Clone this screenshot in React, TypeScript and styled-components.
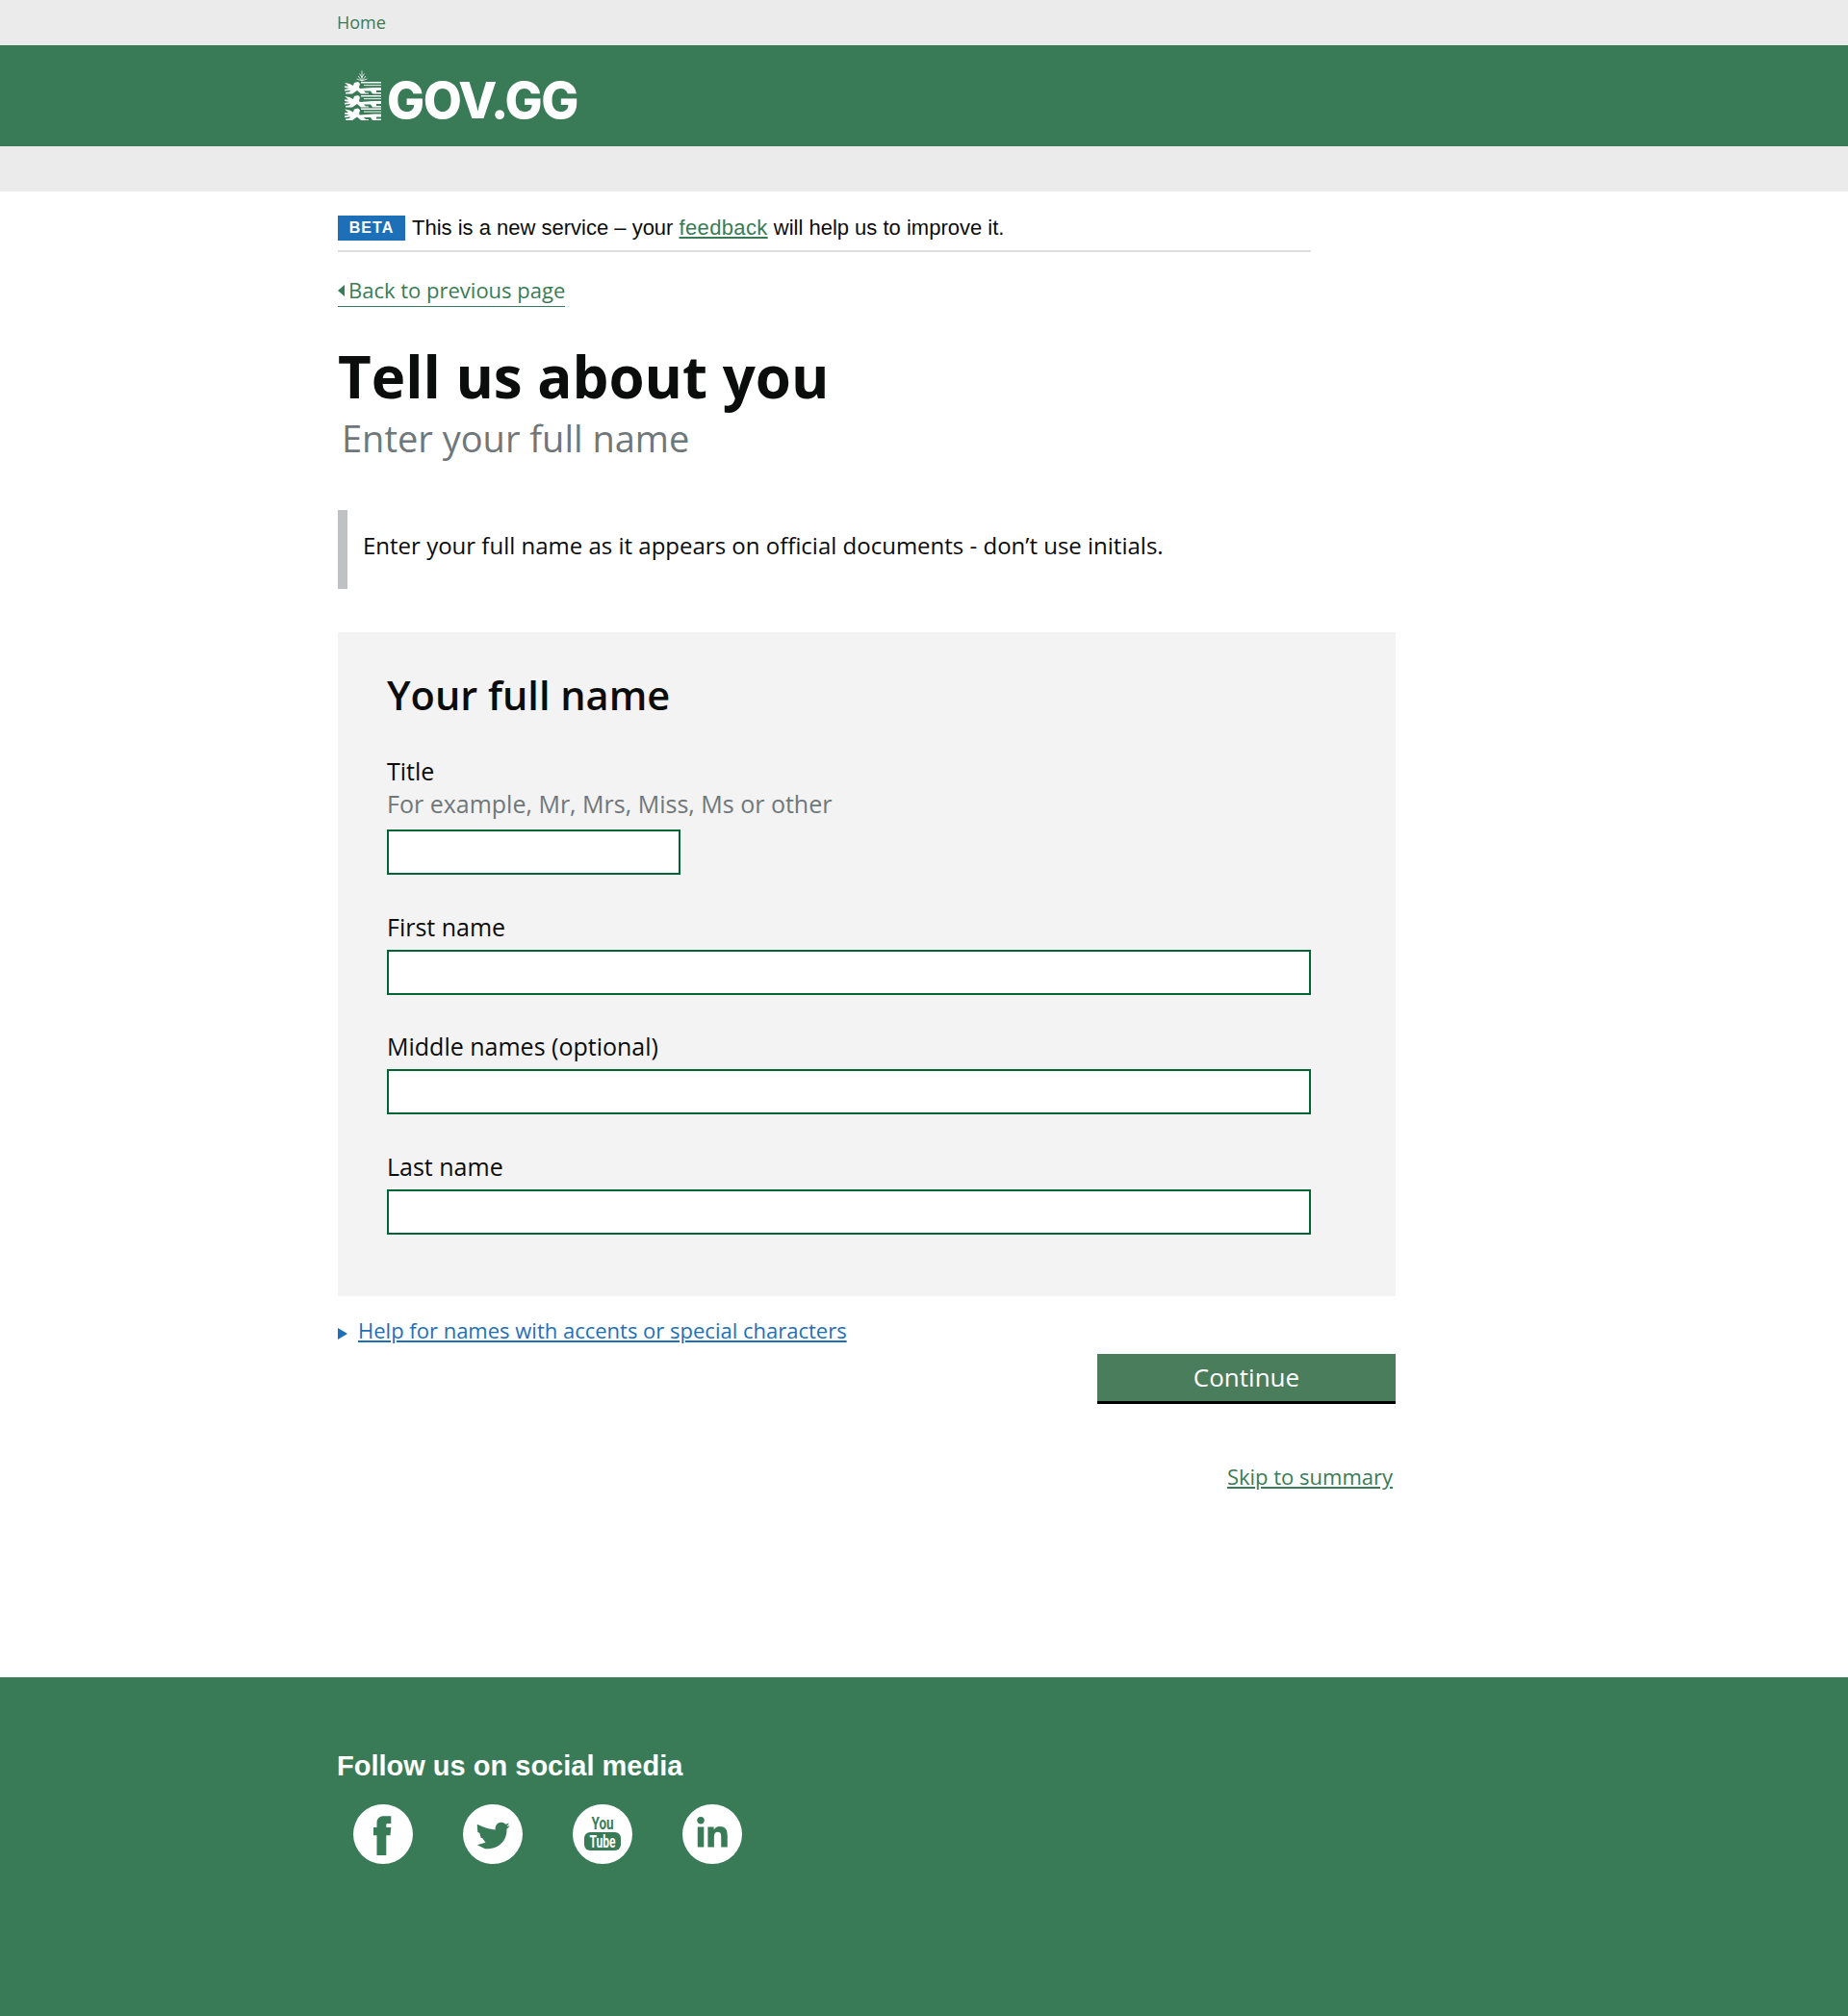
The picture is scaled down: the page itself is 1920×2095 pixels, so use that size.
import React from 'react';
import styled, { createGlobalStyle } from 'styled-components';
import { FaLinkedinIn } from 'react-icons/fa';

const green = '#397b57';

const GlobalStyle = createGlobalStyle`
  html, body { margin: 0; padding: 0; background: #fff; }
  body { font-family: "Open Sans", "Liberation Sans", sans-serif; color: #0b0c0c; }
`;

const Lion = ({ y }: { y: number }) => (
  <g transform={`translate(0 ${y})`} fill="#fff">
    <path d="M0 2l5 1 4 2 1-3 4-1 2 2-1 4 1 1 14-1h8v3h-5v2h5v1.500h-9l-2-3h-7l2 2h3v1h-8l-4-3.500-5 3.500H1V12l4-.5 1-1.500-6 .5V9l5-1-5-1V5.500h4z" />
    <rect x="17" y="1" width="21" height="1.500" />
    <rect x="20" y="4" width="18" height="1.200" opacity=".8" />
  </g>
);

const Crest = () => (
  <CrestSvg viewBox="0 0 38 52" aria-hidden="true">
    <g stroke="#fff" strokeWidth=".9" fill="none" opacity=".85">
      <path d="M18 .5v10.500M18 11l-4-5M18 11l4-5M18 11l-5.500-2M18 11l5.500-2M15.500 3.500l2.500 4 2.500-4" />
    </g>
    <Lion y={11} />
    <Lion y={25} />
    <Lion y={38.500} />
  </CrestSvg>
);

const FacebookMark = () => (
  <svg viewBox="0 0 62 62" width="62" height="62" aria-hidden="true">
    <path
      fill={green}
      d="M24.500 53V32.300H21V24h3.500v-4.500c0-5 3-7.200 7.500-7.200h7.300V20h-3.800c-1 0-1.200.6-1.200 1.500V24h5l-.8 8.300h-4.200V53z"
    />
  </svg>
);

const TwitterMark = () => (
  <svg viewBox="0 0 62 62" width="62" height="62" aria-hidden="true">
    <path
      fill={green}
      d="M48 19.600l-3.500 1.200c-1.500-1.500-3.500-2.200-5.300-2-3.700.4-5.900 3.500-5.600 7.600-6.600-.4-13-3-18.900-5.700l.6 8.300 2 .7 1.400 5.300 1.300 0 3.500 4.700-8.800 2.600 8.300 4c15 .7 23-9 22.500-20.800 1.500-.9 2.300-2 3-3.200l-3 .7z"
    />
  </svg>
);

const YouTubeMark = () => (
  <svg viewBox="0 0 62 62" width="62" height="62" aria-hidden="true">
    <text x="31" y="26" textAnchor="middle" fontFamily="Roboto, sans-serif" fontWeight="700" fontSize="19" textLength="23" lengthAdjust="spacingAndGlyphs" fill={green}>You</text>
    <rect x="12" y="29" width="38" height="19" rx="6" fill={green} />
    <text x="31" y="45" textAnchor="middle" fontFamily="Roboto, sans-serif" fontWeight="700" fontSize="18" textLength="27" lengthAdjust="spacingAndGlyphs" fill="#fff">Tube</text>
  </svg>
);

const fields = [
  { id: 'first', label: 'First name' },
  { id: 'middle', label: 'Middle names (optional)' },
  { id: 'last', label: 'Last name' },
];

export default function App() {
  return (
    <>
      <GlobalStyle />
      <TopBar>
        <Wrap>
          <HomeLink href="#">Home</HomeLink>
        </Wrap>
      </TopBar>
      <Masthead>
        <Wrap>
          <Logo href="#">
            <Crest />
            <LogoText>GOV.GG</LogoText>
          </Logo>
        </Wrap>
      </Masthead>
      <SubBar />
      <Main>
        <BetaRow>
          <BetaTag>BETA</BetaTag>
          <BetaText>
            This is a new service – your <BetaLink href="#">feedback</BetaLink> will help us to improve it.
          </BetaText>
        </BetaRow>
        <BackLink href="#">Back to previous page</BackLink>
        <Heading>Tell us about you</Heading>
        <SubHeading>Enter your full name</SubHeading>
        <Inset>Enter your full name as it appears on official documents - don’t use initials.</Inset>
        <Panel>
          <PanelTitle>Your full name</PanelTitle>
          <Field>
            <Label htmlFor="title">Title</Label>
            <Hint>For example, Mr, Mrs, Miss, Ms or other</Hint>
            <Input id="title" $short />
          </Field>
          {fields.map((f) => (
            <Field key={f.id}>
              <Label htmlFor={f.id}>{f.label}</Label>
              <Input id={f.id} />
            </Field>
          ))}
        </Panel>
        <HelpLine>
          <HelpArrow />
          <HelpLink href="#">Help for names with accents or special characters</HelpLink>
        </HelpLine>
        <Actions>
          <ContinueButton type="button">Continue</ContinueButton>
          <SkipLink href="#">Skip to summary</SkipLink>
        </Actions>
      </Main>
      <Footer>
        <Wrap>
          <FooterTitle>Follow us on social media</FooterTitle>
          <Socials>
            <Social href="#" aria-label="Facebook"><FacebookMark /></Social>
            <Social href="#" aria-label="Twitter"><TwitterMark /></Social>
            <Social href="#" aria-label="YouTube"><YouTubeMark /></Social>
            <Social href="#" aria-label="LinkedIn"><FaLinkedinIn size={36} /></Social>
          </Socials>
        </Wrap>
      </Footer>
    </>
  );
}

const Wrap = styled.div`
  width: 1218px;
  margin-left: 350px;
`;

const TopBar = styled.div`
  height: 47px;
  background: #ebebeb;
  display: flex;
  align-items: center;
`;

const HomeLink = styled.a`
  font-size: 18px;
  color: ${green};
  text-decoration: none;
  margin-top: -1px;
  display: block;
`;

const Masthead = styled.header`
  height: 105px;
  background: ${green};
  display: flex;
  align-items: flex-start;
`;

const Logo = styled.a`
  display: flex;
  align-items: flex-end;
  gap: 6px;
  margin: 26px 0 0 8px;
  height: 52px;
  text-decoration: none;
`;

const CrestSvg = styled.svg`
  width: 38px;
  height: 52px;
  flex: none;
`;

const LogoText = styled.span`
  font-family: Inter, "Liberation Sans", sans-serif;
  font-weight: 800;
  font-size: 52px;
  line-height: 40px;
  letter-spacing: -1.4px;
  color: #fff;
`;

const SubBar = styled.div`
  height: 47px;
  background: #ebebeb;
`;

const Main = styled.main`
  width: 1099px;
  margin-left: 351px;
  height: 1544px;
  padding-top: 25px;
  box-sizing: border-box;
`;

const BetaRow = styled.div`
  width: 1011px;
  height: 36px;
  border-bottom: 2px solid #dddddd;
  display: flex;
  align-items: flex-start;
  gap: 7px;
`;

const BetaTag = styled.strong`
  width: 70px;
  height: 26px;
  background: #1d70b8;
  color: #fff;
  font-family: "Liberation Sans", Arial, sans-serif;
  font-size: 16px;
  font-weight: 700;
  letter-spacing: 1px;
  line-height: 26px;
  text-align: center;
`;

const BetaText = styled.span`
  font-family: "Liberation Sans", Arial, sans-serif;
  font-size: 22px;
  line-height: 26px;
`;

const BetaLink = styled.a`
  color: ${green};
  letter-spacing: 0.35px;
  text-decoration: underline;
`;

const BackLink = styled.a`
  display: inline-block;
  margin-top: 24px;
  padding-bottom: 2px;
  font-size: 22px;
  line-height: 30px;
  color: ${green};
  text-decoration: none;
  border-bottom: 1px solid ${green};
  &::before {
    content: '';
    display: inline-block;
    border-style: solid;
    border-width: 6px 7px 6px 0;
    border-color: transparent ${green} transparent transparent;
    margin-right: 4px;
    vertical-align: 2px;
  }
`;

const Heading = styled.h1`
  margin: 34px 0 0;
  font-size: 60px;
  font-weight: 700;
  line-height: 76px;
`;

const SubHeading = styled.p`
  margin: 0 0 0 4px;
  font-size: 38px;
  line-height: 52px;
  color: #6f777b;
`;

const Inset = styled.div`
  margin-top: 49px;
  height: 82px;
  box-sizing: border-box;
  border-left: 10px solid #bfc1c3;
  padding-left: 16px;
  font-size: 24px;
  line-height: 74px;
`;

const Panel = styled.section`
  margin-top: 45px;
  height: 690px;
  box-sizing: border-box;
  background: #f3f3f3;
  padding: 38px 51px 0;
`;

const PanelTitle = styled.h2`
  margin: 0 0 35px;
  font-size: 41.500px;
  font-weight: 600;
  line-height: 54px;
`;

const Field = styled.div`
  margin-bottom: 36.5px;
`;

const Label = styled.label`
  display: block;
  font-size: 25px;
  line-height: 34px;
  margin-bottom: 7px;
`;

const Hint = styled.div`
  font-size: 25px;
  line-height: 34px;
  margin-top: -7px;
  margin-bottom: 10px;
  color: #6f777b;
`;

const Input = styled.input<{ $short?: boolean }>`
  display: block;
  box-sizing: border-box;
  width: ${(p) => (p.$short ? '305px' : '960px')};
  height: 47px;
  border: 2px solid #006435;
  background: #fff;
  padding: 0 8px;
  border-radius: 0;
  outline: none;
`;

const HelpLine = styled.div`
  margin-top: 18px;
  height: 34px;
  display: flex;
  align-items: center;
  gap: 11px;
`;

const HelpArrow = styled.span`
  width: 0;
  height: 0;
  margin-top: 8px;
  border-style: solid;
  border-width: 6px 0 6px 10px;
  border-color: transparent transparent transparent #1d70b8;
`;

const HelpLink = styled.a`
  font-size: 22px;
  line-height: 34px;
  color: #1d70b8;
  text-decoration: underline;
`;

const Actions = styled.div`
  display: flex;
  flex-direction: column;
  align-items: flex-end;
  margin-top: 8px;
`;

const ContinueButton = styled.button`
  width: 310px;
  height: 52px;
  border: 0;
  border-bottom: 3px solid #000;
  border-radius: 0;
  background: #4a7d5c;
  color: #fff;
  font-family: "Open Sans", sans-serif;
  font-size: 26px;
  padding: 0 0 2px;
`;

const SkipLink = styled.a`
  margin-top: 58px;
  margin-right: 3px;
  font-size: 22px;
  line-height: 34px;
  color: ${green};
  text-decoration: underline;
`;

const Footer = styled.footer`
  height: 352px;
  background: ${green};
  padding-top: 74px;
  box-sizing: border-box;
`;

const FooterTitle = styled.h2`
  margin: 0;
  font-family: "Liberation Sans", Arial, sans-serif;
  font-size: 29px;
  font-weight: 700;
  line-height: 36px;
  color: #fff;
`;

const Socials = styled.div`
  display: flex;
  gap: 52px;
  margin: 22px 0 0 17px;
`;

const Social = styled.a`
  width: 62px;
  height: 62px;
  border-radius: 50%;
  background: #fff;
  color: ${green};
  display: flex;
  align-items: center;
  justify-content: center;
`;
